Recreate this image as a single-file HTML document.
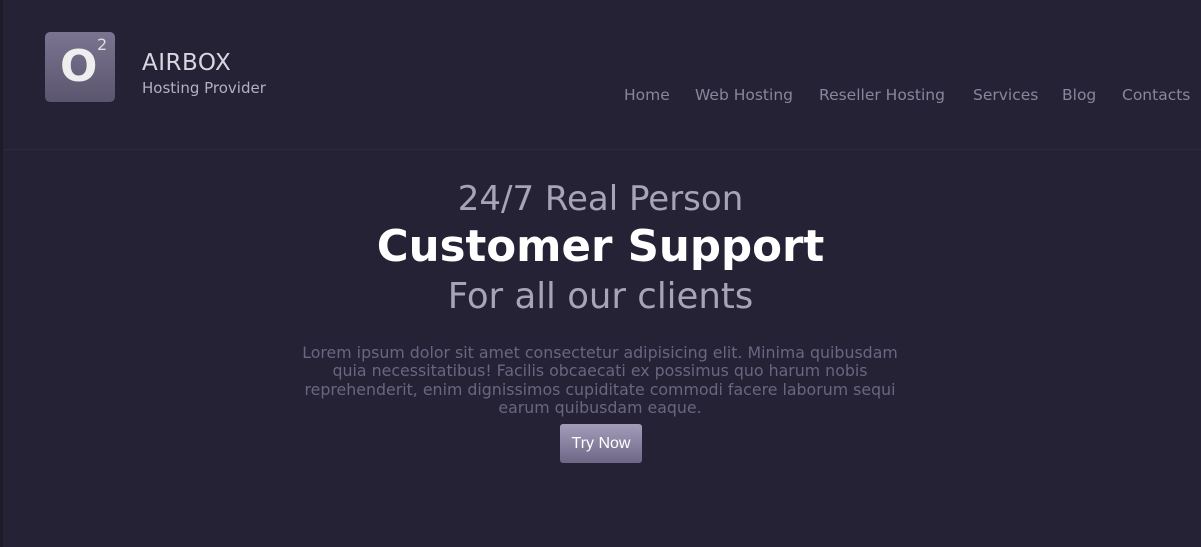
<!DOCTYPE html>
<html><head><style>
html,body{margin:0;padding:0;width:1201px;height:547px;overflow:hidden;background:#252235;font-family:"DejaVu Sans","Liberation Sans",sans-serif;}
.edge{position:absolute;left:0;top:0;width:3px;height:547px;background:#1d1b27}
.logo{position:absolute;left:45px;top:32px;width:70px;height:70px;border-radius:5px;background:linear-gradient(#7a7490,#5b556f)}
.logo .o{position:absolute;left:15px;top:11px;font:bold 44px "DejaVu Sans",sans-serif;color:#eee;line-height:48px}
.logo .s{position:absolute;left:52px;top:3px;font:16px "DejaVu Sans",sans-serif;color:#ddd}
.t1{position:absolute;left:142px;top:50px;font-size:23px;color:#d9d6e2;letter-spacing:0.5px}
.t2{position:absolute;left:142px;top:79px;font-size:15px;color:#b3afc0}
.nav{position:absolute;top:86px;font-size:15.5px;color:#8a859c}
.line{position:absolute;left:3px;right:0;top:149px;height:1px;background:#2d2a3c}
.c{position:absolute;left:0;width:1201px;text-align:center}
.h1{top:179px;font-size:34px;color:#a8a4b6}
.h2{top:222px;font-size:43.5px;font-weight:bold;color:#fff}
.h3{top:276px;font-size:35.5px;color:#a8a4b6}
.p{top:344px;left:250px;width:700px;font-size:15.8px;line-height:18.3px;color:#6a6580}
.btn{position:absolute;left:560px;top:424px;width:82px;height:39px;border-radius:3px;background:linear-gradient(#a49cbb,#6d6785);color:#fff;font:16px "Liberation Sans",sans-serif;text-align:center;line-height:39px}
</style></head><body>
<div class="edge"></div>
<div class="logo"><span class="o">O</span><span class="s">2</span></div>
<div class="t1">AIRBOX</div>
<div class="t2">Hosting Provider</div>
<div class="nav" style="left:624px">Home</div>
<div class="nav" style="left:695px">Web Hosting</div>
<div class="nav" style="left:819px">Reseller Hosting</div>
<div class="nav" style="left:973px">Services</div>
<div class="nav" style="left:1062px">Blog</div>
<div class="nav" style="left:1122px">Contacts</div>
<div class="line"></div>
<div class="c h1">24/7 Real Person</div>
<div class="c h2">Customer Support</div>
<div class="c h3">For all our clients</div>
<div class="c p">Lorem ipsum dolor sit amet consectetur adipisicing elit. Minima quibusdam<br>quia necessitatibus! Facilis obcaecati ex possimus quo harum nobis<br>reprehenderit, enim dignissimos cupiditate commodi facere laborum sequi<br>earum quibusdam eaque.</div>
<div class="btn">Try Now</div>
</body></html>
